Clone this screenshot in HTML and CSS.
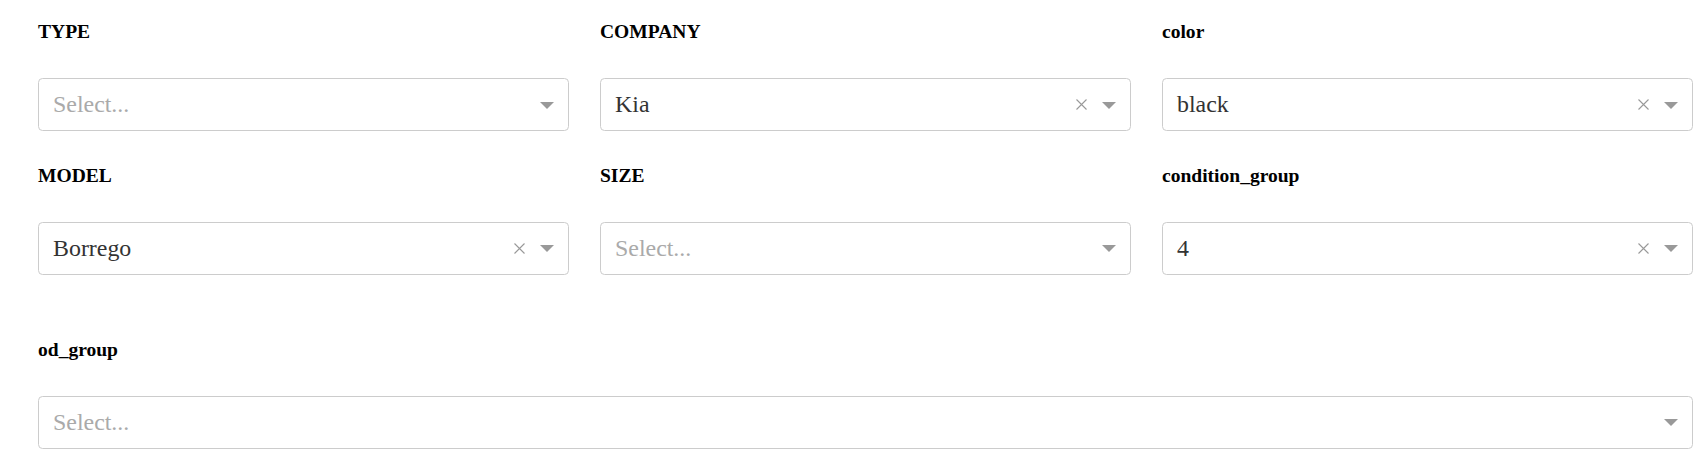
FILE: index.html
```html
<!DOCTYPE html>
<html>
<head>
<meta charset="utf-8">
<link rel="stylesheet" href="styles.css">
</head>
<body>
<div class="page">
  <div class="grid">
    <div class="field">
      <div class="label">TYPE</div>
      <div class="select">
        <span class="value placeholder">Select...</span>
        <span class="arrow"></span>
      </div>
    </div>
    <div class="field">
      <div class="label">COMPANY</div>
      <div class="select">
        <span class="value">Kia</span>
        <svg class="clear" viewBox="0 0 11 11"><path d="M0.5 0.5L10.5 10.5M10.5 0.5L0.5 10.5"/></svg>
        <span class="arrow"></span>
      </div>
    </div>
    <div class="field">
      <div class="label">color</div>
      <div class="select">
        <span class="value">black</span>
        <svg class="clear" viewBox="0 0 11 11"><path d="M0.5 0.5L10.5 10.5M10.5 0.5L0.5 10.5"/></svg>
        <span class="arrow"></span>
      </div>
    </div>
    <div class="field">
      <div class="label">MODEL</div>
      <div class="select">
        <span class="value">Borrego</span>
        <svg class="clear" viewBox="0 0 11 11"><path d="M0.5 0.5L10.5 10.5M10.5 0.5L0.5 10.5"/></svg>
        <span class="arrow"></span>
      </div>
    </div>
    <div class="field">
      <div class="label">SIZE</div>
      <div class="select">
        <span class="value placeholder">Select...</span>
        <span class="arrow"></span>
      </div>
    </div>
    <div class="field">
      <div class="label">condition_group</div>
      <div class="select">
        <span class="value">4</span>
        <svg class="clear" viewBox="0 0 11 11"><path d="M0.5 0.5L10.5 10.5M10.5 0.5L0.5 10.5"/></svg>
        <span class="arrow"></span>
      </div>
    </div>
  </div>
  <div class="field wide">
    <div class="label">od_group</div>
    <div class="select">
      <span class="value placeholder">Select...</span>
      <span class="arrow"></span>
    </div>
  </div>
</div>
</body>
</html>
```

FILE: styles.css
```css
body {
  margin: 0;
  background: #fff;
  font-family: "Liberation Serif", "Times New Roman", serif;
}

.page {
  padding: 21px 10px 0 38px;
}

.grid {
  display: grid;
  grid-template-columns: repeat(3, 1fr);
  column-gap: 31px;
  row-gap: 33.5px;
}

.label {
  font-weight: bold;
  font-size: 19.55px;
  line-height: 22px;
  height: 22px;
  margin-bottom: 35px;
  color: #000;
}

.select {
  height: 53px;
  box-sizing: border-box;
  border: 1px solid #ccc;
  border-radius: 4.5px;
  display: flex;
  align-items: center;
  padding: 0 14px 0 14px;
  background: #fff;
}

.value {
  flex: 1;
  font-size: 23.9px;
  color: #333;
  white-space: nowrap;
}

.placeholder {
  color: #aaa;
}

.clear {
  width: 11px;
  height: 11px;
  margin-right: 15px;
  fill: none;
  stroke: #999;
  stroke-width: 1.1;
}

.arrow {
  width: 0;
  height: 0;
  border-left: 7px solid transparent;
  border-right: 7px solid transparent;
  border-top: 7px solid #999;
  margin-top: 1px;
}

.wide {
  margin-top: 64px;
}
```
